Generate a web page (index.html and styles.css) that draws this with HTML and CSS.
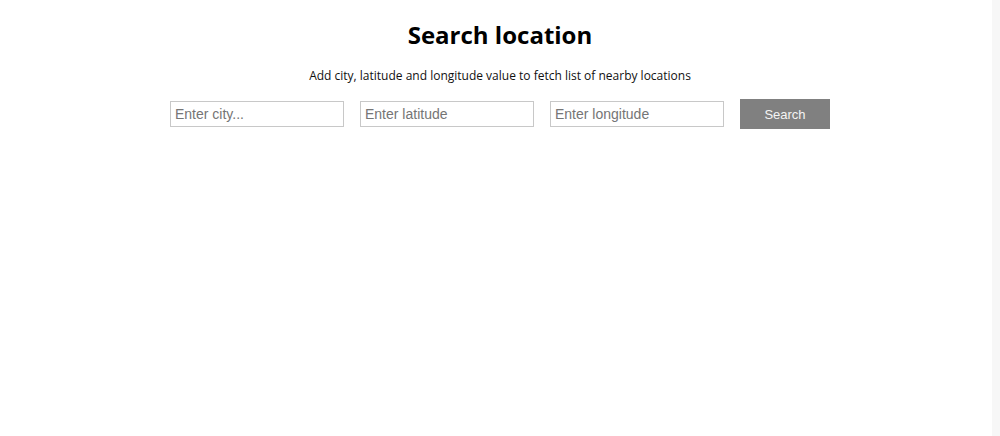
FILE: index.html
```html
<!DOCTYPE html>
<html>
<head>
<meta charset="utf-8">
<link rel="stylesheet" href="styles.css">
</head>
<body>
<div class="page">
  <main class="main">
    <h1 class="title">Search location</h1>
    <p class="subtitle">Add city, latitude and longitude value to fetch list of nearby locations</p>
    <form class="search-row">
      <input class="field" type="text" placeholder="Enter city...">
      <input class="field" type="text" placeholder="Enter latitude">
      <input class="field" type="text" placeholder="Enter longitude">
      <button class="btn" type="button">Search</button>
    </form>
  </main>
  <div class="edge"></div>
</div>
</body>
</html>
```
FILE: styles.css
```css
html, body {
  margin: 0;
  padding: 0;
  height: 100%;
  background: #fff;
}
.page {
  display: flex;
  height: 100%;
}
.main {
  flex: 1;
  display: flex;
  flex-direction: column;
  align-items: center;
  padding-left: 8px;
}
.title {
  margin: 19px 0 0;
  font-family: "Open Sans", "Noto Sans", sans-serif;
  font-weight: 700;
  font-size: 24px;
  line-height: 32px;
  color: #000;
}
.subtitle {
  margin: 16px 0 0;
  font-family: "Open Sans", "Noto Sans", sans-serif;
  font-size: 12px;
  line-height: 18px;
  color: #111;
}
.search-row {
  display: flex;
  align-items: center;
  gap: 16px;
  margin-top: 14px;
}
.field {
  box-sizing: border-box;
  width: 174px;
  height: 26px;
  border: 1px solid #c8c8c8;
  padding: 0 4px;
  font-family: "Liberation Sans", Arial, sans-serif;
  font-size: 14px;
  outline: none;
}
.field::placeholder {
  color: #757575;
}
.btn {
  box-sizing: border-box;
  width: 90px;
  height: 30px;
  border: none;
  background: #808080;
  color: #f4f4f4;
  font-family: "Liberation Sans", Arial, sans-serif;
  font-size: 13px;
  padding: 0;
}
.edge {
  width: 8px;
  background: #f7f7f7;
}
```
